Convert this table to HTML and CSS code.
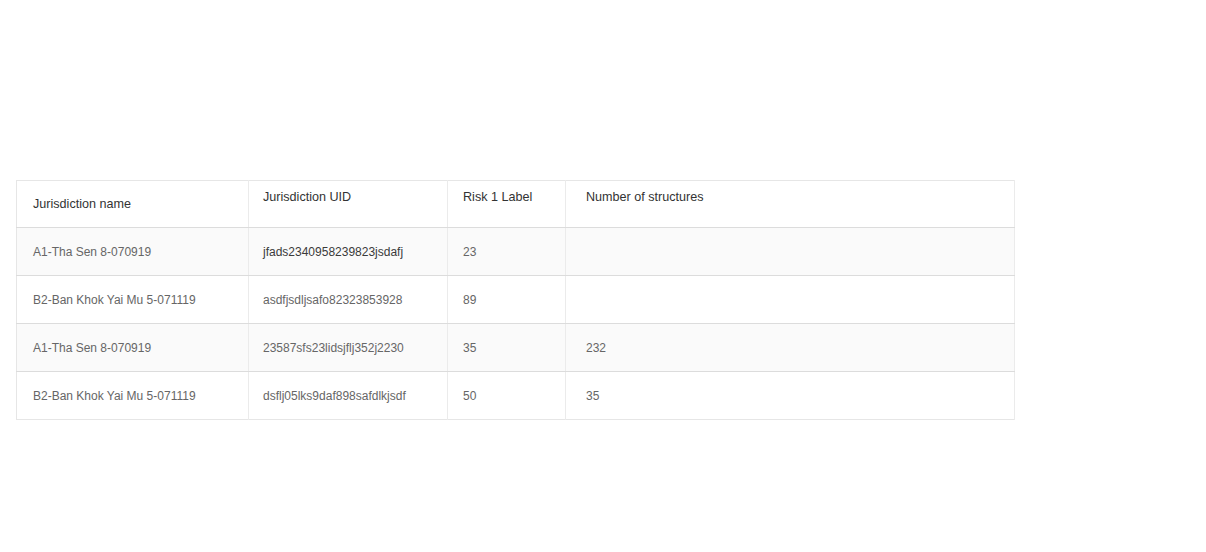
FILE: index.html
```html
<!DOCTYPE html>
<html>
<head>
<meta charset="utf-8">
<link rel="stylesheet" href="styles.css">
</head>
<body>
<div class="wrap">
  <table class="grid">
    <colgroup>
      <col class="c1"><col class="c2"><col class="c3"><col class="c4">
    </colgroup>
    <thead>
      <tr>
        <th class="mid">Jurisdiction name</th>
        <th class="uid">Jurisdiction UID</th>
        <th>Risk 1 Label</th>
        <th class="last">Number of structures</th>
      </tr>
    </thead>
    <tbody>
      <tr class="odd">
        <td>A1-Tha Sen 8-070919</td>
        <td class="uid dark">jfads2340958239823jsdafj</td>
        <td>23</td>
        <td class="last"></td>
      </tr>
      <tr>
        <td>B2-Ban Khok Yai Mu 5-071119</td>
        <td class="uid">asdfjsdljsafo82323853928</td>
        <td>89</td>
        <td class="last"></td>
      </tr>
      <tr class="odd">
        <td>A1-Tha Sen 8-070919</td>
        <td class="uid">23587sfs23lidsjflj352j2230</td>
        <td>35</td>
        <td class="last">232</td>
      </tr>
      <tr>
        <td>B2-Ban Khok Yai Mu 5-071119</td>
        <td class="uid">dsflj05lks9daf898safdlkjsdf</td>
        <td>50</td>
        <td class="last">35</td>
      </tr>
    </tbody>
  </table>
</div>
</body>
</html>
```

FILE: styles.css
```css
html, body {
  margin: 0;
  padding: 0;
  background: #fff;
}
body {
  font-family: "Liberation Sans", Arial, Helvetica, sans-serif;
  font-size: 12px;
  color: #666;
}
.wrap {
  padding: 180px 0 0 16px;
}
.grid {
  border-collapse: collapse;
  table-layout: fixed;
  width: 998px;
  border: 1px solid #e6e6e6;
}
.c1 { width: 232px; }
.c2 { width: 199px; }
.c3 { width: 118px; }
.c4 { width: 449px; }
.grid th,
.grid td {
  border-right: 1px solid #ebebeb;
  text-align: left;
  padding: 0 15px;
  line-height: 14px;
  white-space: nowrap;
}
.grid th {
  height: 47px;
  font-size: 12.6px;
  font-weight: normal;
  color: #333;
  vertical-align: top;
  padding-top: 9px;
  padding-bottom: 0;
  border-bottom: 1px solid #dcdcdc;
  box-sizing: border-box;
}
.grid th.mid {
  vertical-align: middle;
  padding-top: 0;
  padding-left: 16px;
}
.grid td:first-child { padding-left: 16px; }
.grid .uid { padding-left: 14px; }
.grid td {
  height: 47px;
  vertical-align: middle;
  border-bottom: 1px solid #dcdcdc;
}
.grid tbody tr:last-child td { border-bottom: none; }
.grid .last { padding-left: 20px; }
.grid tr.odd td { background: #fafafa; }
.grid td.dark { color: #3a3a3a; }
```
